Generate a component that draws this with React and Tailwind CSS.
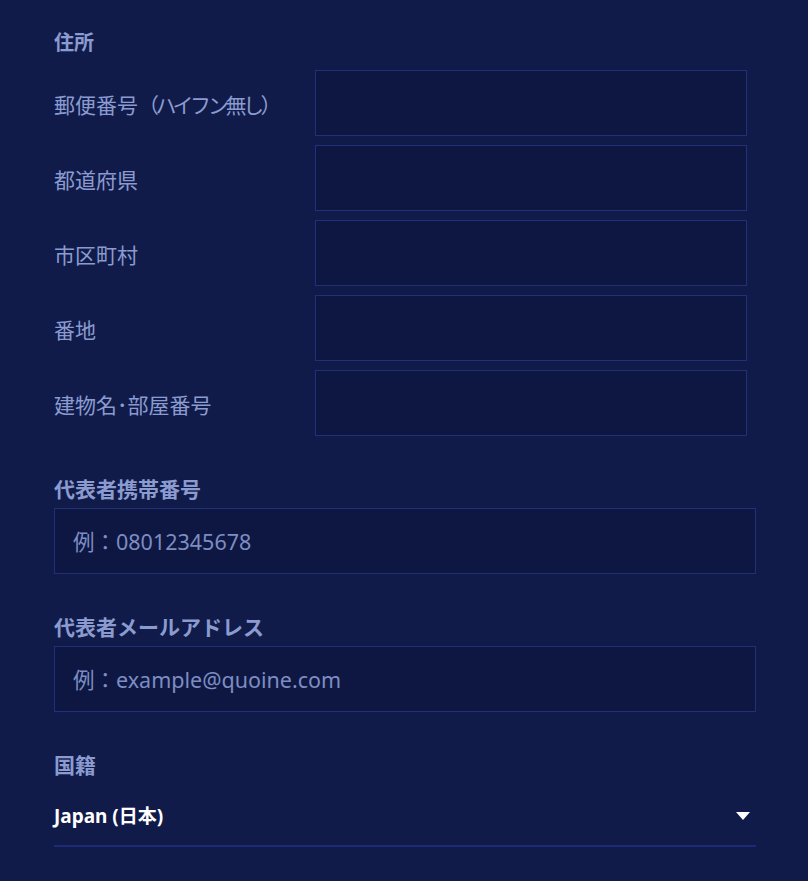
import React from "react";

const addressRows = [
  { label: "郵便番号", note: "（ハイフン無し）" },
  { label: "都道府県" },
  { label: "市区町村" },
  { label: "番地" },
  { label: "建物名･部屋番号" },
];

function App() {
  return (
    <div
      className="min-h-screen w-[808px] bg-[#101b4a] pl-[54px] pr-[52px] pt-[28px] text-[#8b9bd0]"
      style={{ fontFamily: '"Noto Sans", "Noto Sans CJK JP", sans-serif' }}
    >
      <h2 className="text-[20px] font-bold leading-[30px]">住所</h2>
      <div className="mt-[12px] flex flex-col gap-[9px]">
        {addressRows.map((row) => (
          <div key={row.label} className="flex items-center">
            <label className="w-[261px] shrink-0 pt-[3px] text-[21px] leading-[30px]">
              {row.label}
              {row.note && <span className="tracking-[-3.5px]">{row.note}</span>}
            </label>
            <input
              type="text"
              className="h-[66px] w-[432px] border border-[#22307a] bg-[#0e1741] px-[18px] text-[22px] text-white outline-none"
            />
          </div>
        ))}
      </div>

      <h2 className="mt-[38px] text-[21px] font-bold leading-[30px]">代表者携帯番号</h2>
      <input
        type="text"
        placeholder="例：08012345678"
        className="mt-[4px] h-[66px] w-[702px] border border-[#22307a] bg-[#0e1741] px-[18px] text-[21.5px] text-white outline-none placeholder:text-[#7d8dc3]"
      />

      <h2 className="mt-[38px] text-[21px] font-bold leading-[30px]">代表者メールアドレス</h2>
      <input
        type="text"
        placeholder="例：example@quoine.com"
        className="mt-[4px] h-[66px] w-[702px] border border-[#22307a] bg-[#0e1741] px-[18px] text-[21.5px] text-white outline-none placeholder:text-[#7d8dc3]"
      />

      <h2 className="mt-[38px] text-[21px] font-bold leading-[30px]">国籍</h2>
      <div className="mt-[20px] flex h-[32px] w-[702px] items-center justify-between">
        <span className="text-[19px] font-bold text-white">Japan (日本)</span>
        <svg width="16" height="10" viewBox="0 0 16 10" className="mr-[5px]">
          <path d="M1 1 L15 1 L8 9 Z" fill="#ffffff" />
        </svg>
      </div>
      <div className="mt-[13px] h-[2px] w-[702px] bg-[#1d2a78]" />
    </div>
  );
}

export default App;
